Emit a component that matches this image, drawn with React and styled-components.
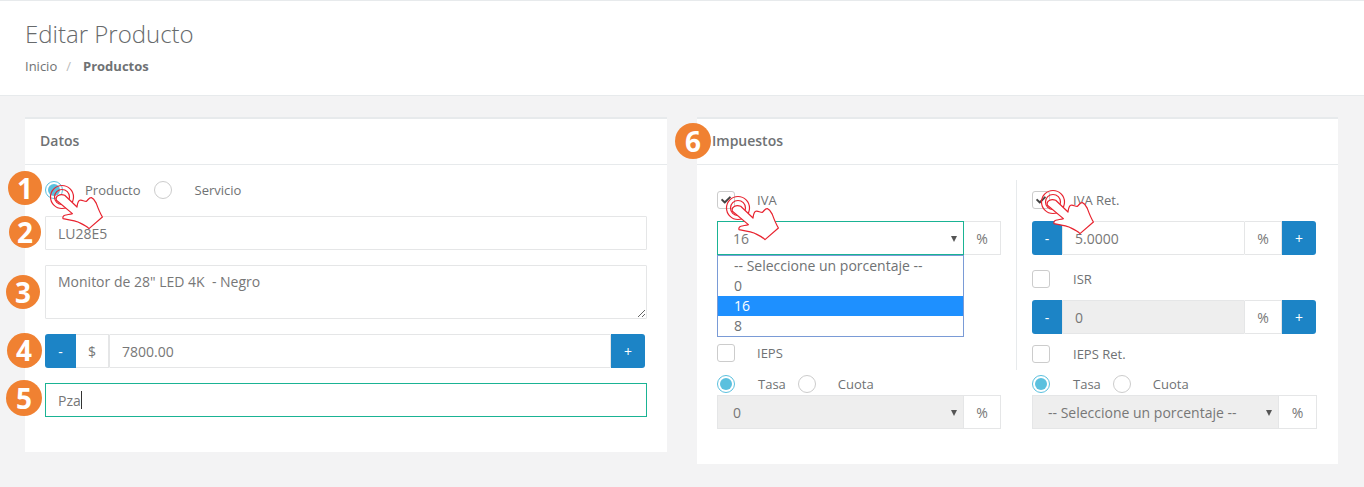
import React from "react";
import styled, { createGlobalStyle } from "styled-components";
import { FaCheck } from "react-icons/fa";

const GlobalStyle = createGlobalStyle`
  html, body {
    margin: 0;
    padding: 0;
    background: #f3f3f4;
    font-family: "Open Sans", "Liberation Sans", sans-serif;
    font-size: 13px;
    color: #6f7274;
  }
  * { box-sizing: border-box; }
`;

const Page = styled.div`
  position: relative;
  width: 1364px;
  height: 487px;
  overflow: hidden;
`;

const Heading = styled.header`
  height: 96px;
  background: #fff;
  border-top: 1px solid #e7eaec;
  border-bottom: 1px solid #e7eaec;
  padding: 20px 25px 0;
`;

const Title = styled.h2`
  margin: 0;
  font-size: 24px;
  font-weight: 300;
  line-height: 26px;
  color: #676a6c;
`;

const Crumbs = styled.div`
  display: flex;
  margin-top: 10px;
  line-height: 18px;
`;

const Slash = styled.span`
  color: #bbb;
  margin: 0 12px 0 9px;
`;

const Main = styled.main`
  display: grid;
  grid-template-columns: 642px 641px;
  gap: 30px;
  align-items: start;
  padding: 21px 0 0 25px;
`;

const Panel = styled.section`
  background: #fff;
  border-top: 2px solid #e7eaec;
`;

const PanelTitle = styled.h5`
  margin: 0;
  height: 46px;
  padding: 0 15px;
  border-bottom: 1px solid #e7eaec;
  font-size: 14px;
  font-weight: 600;
  line-height: 44px;
  color: #6f7274;
`;

const FormBody = styled.div`
  display: flex;
  flex-direction: column;
  gap: 15px;
  padding: 16px 20px 35px;
`;

const ChoiceRow = styled.div`
  display: flex;
  align-items: center;
  height: 18px;
  margin: ${(p) => p.$margin || "0"};
`;

const Radio = styled.span`
  flex: none;
  display: flex;
  align-items: center;
  justify-content: center;
  width: 18px;
  height: 18px;
  border-radius: 50%;
  border: 1px solid ${(p) => (p.$on ? "#5bc0de" : "#ccc")};
  background: #fff;
  &::after {
    content: "";
    display: ${(p) => (p.$on ? "block" : "none")};
    width: 12px;
    height: 12px;
    border-radius: 50%;
    background: #5bc0de;
  }
`;

const Box = styled.span`
  flex: none;
  display: flex;
  align-items: center;
  justify-content: center;
  width: 18px;
  height: 18px;
  border: 1px solid #ccc;
  border-radius: 3px;
  background: #fff;
  color: #444;
  font-size: 10px;
`;

const ChoiceLabel = styled.span`
  margin: 0 ${(p) => p.$after || "13px"} 0 ${(p) => p.$gap || "22px"};
  line-height: 18px;
  white-space: nowrap;
`;

const TextInput = styled.input`
  display: block;
  width: 100%;
  min-width: 0;
  height: 34px;
  padding: 0 12px;
  border: 1px solid #e5e6e7;
  border-radius: 1px;
  outline: none;
  background: ${(p) => (p.$off ? "#eee" : "#fff")};
  font: inherit;
  font-size: 14px;
  color: #777;
`;

const TextArea = styled.textarea`
  display: block;
  width: 100%;
  height: 54px;
  padding: 6px 12px;
  border: 1px solid #e5e6e7;
  border-radius: 1px;
  outline: none;
  font: inherit;
  font-size: 14px;
  line-height: 20px;
  color: #777;
`;

const FocusField = styled.div`
  display: flex;
  align-items: center;
  height: 34px;
  padding: 0 12px;
  border: 1px solid #1ab394;
  font-size: 14px;
  color: #777;
`;

const Caret = styled.span`
  width: 1px;
  height: 18px;
  background: #333;
`;

const Group = styled.div`
  display: flex;
  height: 34px;
  margin-right: ${(p) => p.$inset || "0"};
`;

const Step = styled.span`
  flex: none;
  display: flex;
  align-items: center;
  justify-content: center;
  width: ${(p) => p.$width || "31px"};
  background: #1c84c6;
  color: #fff;
  font-size: 14px;
  border-radius: ${(p) => (p.$end ? "0 3px 3px 0" : "3px 0 0 3px")};
`;

const Addon = styled.span`
  flex: none;
  display: flex;
  align-items: center;
  justify-content: center;
  width: ${(p) => p.$width || "37px"};
  border: 1px solid #e5e6e7;
  border-left-width: ${(p) => (p.$joined ? "0" : "1px")};
  background: #fff;
  font-size: 14px;
  color: #777;
`;

const SelectBox = styled.div`
  position: relative;
  flex: none;
  display: flex;
  align-items: center;
  width: 247px;
  padding: 0 15px;
  border: 1px solid ${(p) => (p.$focus ? "#1ab394" : "#e5e6e7")};
  background: ${(p) => (p.$off ? "#eee" : "#fff")};
  font-size: 14px;
  color: #777;
  white-space: nowrap;
  &::after {
    content: "";
    position: absolute;
    right: 6px;
    top: 14px;
    border-style: solid;
    border-width: 6px 3.5px 0;
    border-color: #555 transparent transparent;
  }
`;

const Options = styled.ul`
  position: absolute;
  top: 33px;
  left: -1px;
  width: 247px;
  margin: 0;
  padding: 0;
  list-style: none;
  background: #fff;
  border: 1px solid #7a9bd6;
`;

const Option = styled.li`
  height: 20px;
  padding-left: 16px;
  font-size: 14px;
  line-height: 20px;
  background: ${(p) => (p.$on ? "#1e90ff" : "transparent")};
  color: ${(p) => (p.$on ? "#fff" : "#6f7274")};
`;

const TaxGrid = styled.div`
  display: grid;
  grid-template-columns: 284px 285px;
  column-gap: 31px;
  padding: 0 20px;
`;

const TaxBody = styled.div`
  padding: 15px 0 35px;
`;

const TaxColumn = styled.div`
  position: relative;
  display: flex;
  flex-direction: column;
  padding-top: 11px;
  ${(p) =>
    p.$divided &&
    `
    margin-left: -16px;
    padding-left: 15px;
    border-left: 1px solid #e7eaec;
  `}
`;

const RateColumn = styled.div`
  display: flex;
  flex-direction: column;
  gap: 2px;
  padding-top: 5px;
`;

const Badge = styled.span`
  position: absolute;
  left: ${(p) => p.$x - p.$size / 2}px;
  top: ${(p) => p.$y - p.$size / 2}px;
  width: ${(p) => p.$size}px;
  height: ${(p) => p.$size}px;
  display: flex;
  align-items: center;
  justify-content: center;
  border-radius: 50%;
  background: #f08132;
  color: #fff;
  font-size: 28px;
  font-weight: 700;
  line-height: 1;
`;

const HandMark = styled.svg`
  position: absolute;
  left: ${(p) => p.$x - 14}px;
  top: ${(p) => p.$y - 14}px;
  overflow: visible;
`;

const Hand = ({ x, y }) => (
  <HandMark $x={x} $y={y} width="58" height="50" viewBox="-14 -14 58 50" fill="none" stroke="#e8232f" strokeWidth="1.2" strokeLinejoin="round">
    <circle cx="0" cy="0" r="11.5" />
    <circle cx="0" cy="0" r="7.5" />
    <path
      fill="#fff"
      d="M-5.6 3.3 C-7 -1 -2 -3.5 2.7 -1.7 L15 10 C15.5 6 16 4 17.7 3.3 C20 2.5 22 4.5 24.4 4.3 C26 3 27.5 0 29.4 0.6 C32 1.5 33 4 34.4 6.6 C36 11 38 16 40.4 20 L27 31.6 C24 28.5 20 27 16 25 C11 23 6 23 1 21.6 C0.5 20 1.5 18.5 2.7 18.3 C5 17.5 8 17.5 10.4 16.6 Z"
    />
  </HandMark>
);

const percents = ["-- Seleccione un porcentaje --", "0", "16", "8"];

export default function App() {
  return (
    <Page>
      <GlobalStyle />
      <Heading>
        <Title>Editar Producto</Title>
        <Crumbs>
          <span>Inicio</span>
          <Slash>/</Slash>
          <strong>Productos</strong>
        </Crumbs>
      </Heading>
      <Main>
        <Panel>
          <PanelTitle>Datos</PanelTitle>
          <FormBody>
            <ChoiceRow $margin="0 0 2px">
              <Radio $on />
              <ChoiceLabel>Producto</ChoiceLabel>
              <Radio />
              <ChoiceLabel $gap="23px">Servicio</ChoiceLabel>
            </ChoiceRow>
            <TextInput readOnly value="LU28E5" />
            <TextArea readOnly value={'Monitor de 28" LED 4K  - Negro'} />
            <Group $inset="2px">
              <Step>-</Step>
              <Addon $width="33px" $joined>$</Addon>
              <TextInput readOnly value="7800.00" />
              <Step $end $width="34px">+</Step>
            </Group>
            <FocusField>
              Pza
              <Caret />
            </FocusField>
          </FormBody>
        </Panel>
        <Panel>
          <PanelTitle>Impuestos</PanelTitle>
          <TaxBody>
            <TaxGrid>
              <TaxColumn>
                <ChoiceRow $margin="0 0 12px">
                  <Box><FaCheck /></Box>
                  <ChoiceLabel>IVA</ChoiceLabel>
                </ChoiceRow>
                <Group>
                  <SelectBox $focus>
                    16
                    <Options>
                      {percents.map((p) => (
                        <Option key={p} $on={p === "16"}>{p}</Option>
                      ))}
                    </Options>
                  </SelectBox>
                  <Addon $joined>%</Addon>
                </Group>
                <ChoiceRow $margin="auto 0 8px">
                  <Box />
                  <ChoiceLabel>IEPS</ChoiceLabel>
                </ChoiceRow>
              </TaxColumn>
              <TaxColumn $divided>
                <ChoiceRow $margin="0 0 12px">
                  <Box><FaCheck /></Box>
                  <ChoiceLabel $gap="23px">IVA Ret.</ChoiceLabel>
                </ChoiceRow>
                <Group $inset="1px">
                  <Step $width="30px">-</Step>
                  <TextInput readOnly value="5.0000" />
                  <Addon $joined>%</Addon>
                  <Step $end $width="34px">+</Step>
                </Group>
                <ChoiceRow $margin="15px 0 12px">
                  <Box />
                  <ChoiceLabel $gap="23px">ISR</ChoiceLabel>
                </ChoiceRow>
                <Group $inset="1px">
                  <Step $width="30px">-</Step>
                  <TextInput readOnly $off value="0" />
                  <Addon $joined>%</Addon>
                  <Step $end $width="34px">+</Step>
                </Group>
                <ChoiceRow $margin="11px 0 7px">
                  <Box />
                  <ChoiceLabel $gap="23px">IEPS Ret.</ChoiceLabel>
                </ChoiceRow>
              </TaxColumn>
              <RateColumn>
                <ChoiceRow>
                  <Radio $on />
                  <ChoiceLabel $gap="23px" $after="12px">Tasa</ChoiceLabel>
                  <Radio />
                  <ChoiceLabel>Cuota</ChoiceLabel>
                </ChoiceRow>
                <Group>
                  <SelectBox $off>0</SelectBox>
                  <Addon $joined>%</Addon>
                </Group>
              </RateColumn>
              <RateColumn>
                <ChoiceRow>
                  <Radio $on />
                  <ChoiceLabel $gap="23px" $after="12px">Tasa</ChoiceLabel>
                  <Radio />
                  <ChoiceLabel>Cuota</ChoiceLabel>
                </ChoiceRow>
                <Group>
                  <SelectBox $off>-- Seleccione un porcentaje --</SelectBox>
                  <Addon $joined $width="38px">%</Addon>
                </Group>
              </RateColumn>
            </TaxGrid>
          </TaxBody>
        </Panel>
      </Main>

      <Badge $x={25} $y={188} $size={34}>1</Badge>
      <Badge $x={25} $y={232} $size={32}>2</Badge>
      <Badge $x={23} $y={292} $size={34}>3</Badge>
      <Badge $x={24} $y={350} $size={35}>4</Badge>
      <Badge $x={24} $y={398} $size={36}>5</Badge>
      <Badge $x={693} $y={141} $size={36}>6</Badge>

      <Hand x={62} y={197} />
      <Hand x={738} y={208} />
      <Hand x={1053} y={202} />
    </Page>
  );
}
